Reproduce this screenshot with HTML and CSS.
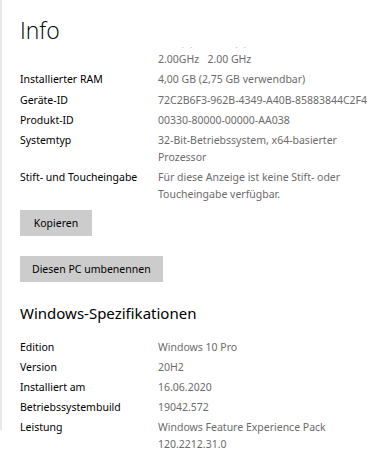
FILE: index.html
```html
<!DOCTYPE html>
<html lang="de">
<head>
    <meta charset="UTF-8">
    <meta name="viewport" content="width=device-width, initial-scale=1.0">
    <title>Info</title>
    <link rel="stylesheet" href="styles.css">
</head>
<body>
    <div class="rail"></div>
    <div class="page">
        <h1 class="page-title">Info</h1>

        <div class="scroll">
            <div class="scroll-inner">
                <dl class="specs">
                    <dt>Prozessor</dt>
                    <dd><span class="nowrap">Intel(R) Celeron(R) CPU 1000M @</span><br>2.00GHz&nbsp;&nbsp; 2.00 GHz</dd>
                    <dt>Installierter RAM</dt>
                    <dd>4,00 GB (2,75 GB verwendbar)</dd>
                    <dt>Geräte-ID</dt>
                    <dd>72C2B6F3-962B-4349-A40B-85883844C2F4</dd>
                    <dt>Produkt-ID</dt>
                    <dd>00330-80000-00000-AA038</dd>
                    <dt>Systemtyp</dt>
                    <dd>32-Bit-Betriebssystem, x64-basierter Prozessor</dd>
                    <dt>Stift- und Toucheingabe</dt>
                    <dd>Für diese Anzeige ist keine Stift- oder Toucheingabe verfügbar.</dd>
                </dl>

                <div class="actions">
                    <button type="button" class="btn">Kopieren</button>
                    <button type="button" class="btn">Diesen PC umbenennen</button>
                </div>

                <h2 class="section-title">Windows-Spezifikationen</h2>

                <dl class="specs specs-tight">
                    <dt>Edition</dt>
                    <dd>Windows 10 Pro</dd>
                    <dt>Version</dt>
                    <dd>20H2</dd>
                    <dt>Installiert am</dt>
                    <dd>16.06.2020</dd>
                    <dt>Betriebssystembuild</dt>
                    <dd>19042.572</dd>
                    <dt>Leistung</dt>
                    <dd>Windows Feature Experience Pack 120.2212.31.0</dd>
                </dl>
            </div>
        </div>
    </div>
</body>
</html>
```

FILE: styles.css
```css
:root {
    --text-main: #000000;
    --text-muted: #6b6b6b;
    --button-bg: #cccccc;
    --rail: #e8e8e8;
}

html, body {
    margin: 0;
    height: 100%;
    overflow: hidden;
}

body {
    background: #ffffff;
    color: var(--text-main);
    font-family: "Noto Sans", "Open Sans", Arial, sans-serif;
    font-size: 10.5px;
}

/* schmale Leiste am linken Rand */
.rail {
    position: absolute;
    top: 0;
    left: 0;
    width: 2px;
    height: 430px;
    background: var(--rail);
}

.page { padding-left: 20px; }

.page-title {
    margin: 0;
    padding-top: 14px;
    height: 33px;
    font-family: "Open Sans", "Noto Sans", sans-serif;
    font-size: 23px;
    font-weight: 300;
    line-height: 32px;
}

.scroll {
    height: 409px;
    overflow: hidden;
}
.scroll-inner { margin-top: -13px; }

.specs {
    display: grid;
    grid-template-columns: 138px 224px;
    row-gap: 3.3px;
    margin: 0;
    line-height: 17px;
}
.specs-tight { row-gap: 3px; }
.specs dt { color: var(--text-main); }
.specs dd { margin: 0; color: var(--text-muted); }
.nowrap { white-space: nowrap; }

.actions {
    display: flex;
    flex-direction: column;
    align-items: flex-start;
    gap: 20px;
    margin-top: 7px;
}

.btn {
    border: none;
    background: var(--button-bg);
    color: var(--text-main);
    font: inherit;
    height: 26px;
    min-width: 72px;
    padding: 0 12px;
}

.section-title {
    margin: 21px 0 16px;
    font-size: 15px;
    font-weight: 400;
    line-height: 20px;
}
```
